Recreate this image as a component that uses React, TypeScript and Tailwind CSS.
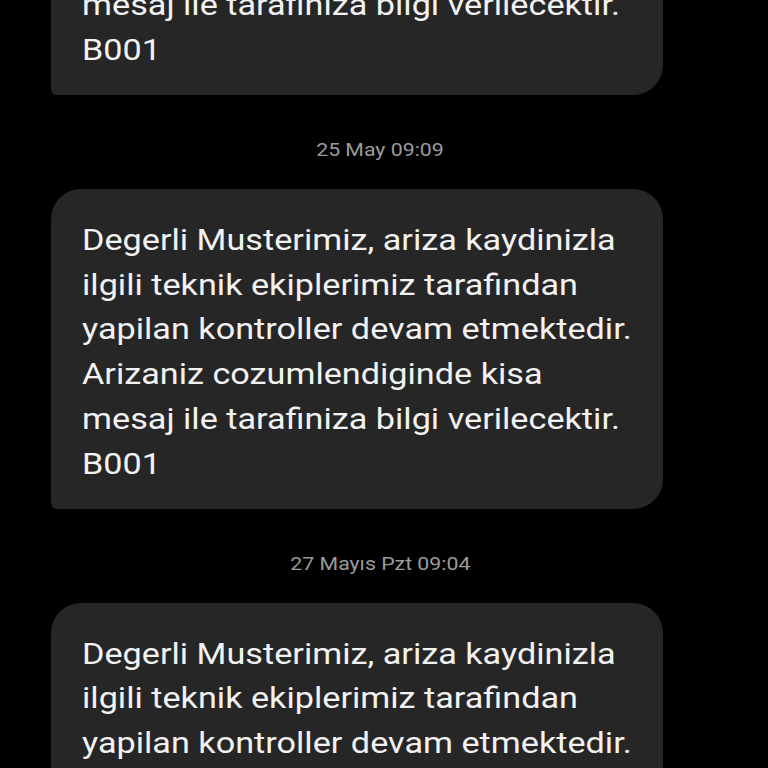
const LINES = [
  "Degerli Musterimiz, ariza kaydinizla",
  "ilgili teknik ekiplerimiz tarafindan",
  "yapilan kontroller devam etmektedir.",
  "Arizaniz cozumlendiginde kisa",
  "mesaj ile tarafiniza bilgi verilecektir.",
  "B001",
];

function Bubble() {
  return (
    <div className="ml-[51px] w-[612px] rounded-[30px] rounded-bl-[6px] bg-[#262626] pl-[31px] pt-[29px] pb-[22px] text-[30px] leading-[44.8px] text-[#f2f2f2]">
      {LINES.map((l, i) => (
        <div key={i} className="origin-left scale-x-[1.14] whitespace-nowrap">{l}</div>
      ))}
    </div>
  );
}

function Stamp({ text }: { text: string }) {
  return (
    <div className="flex h-[94px] justify-center pt-[44px] pr-[8px] text-[19px] leading-[22px] text-[#9b9b9b]">
      <span className="scale-x-[1.12] whitespace-nowrap">{text}</span>
    </div>
  );
}

export default function App() {
  return (
    <div className="h-[768px] w-[768px] overflow-hidden bg-black" style={{ fontFamily: "Roboto, 'Noto Sans', sans-serif" }}>
      <div className="mt-[-225px] flex flex-col">
        <Bubble />
        <Stamp text="25 May 09:09" />
        <Bubble />
        <Stamp text="27 Mayıs Pzt 09:04" />
        <Bubble />
      </div>
    </div>
  );
}
